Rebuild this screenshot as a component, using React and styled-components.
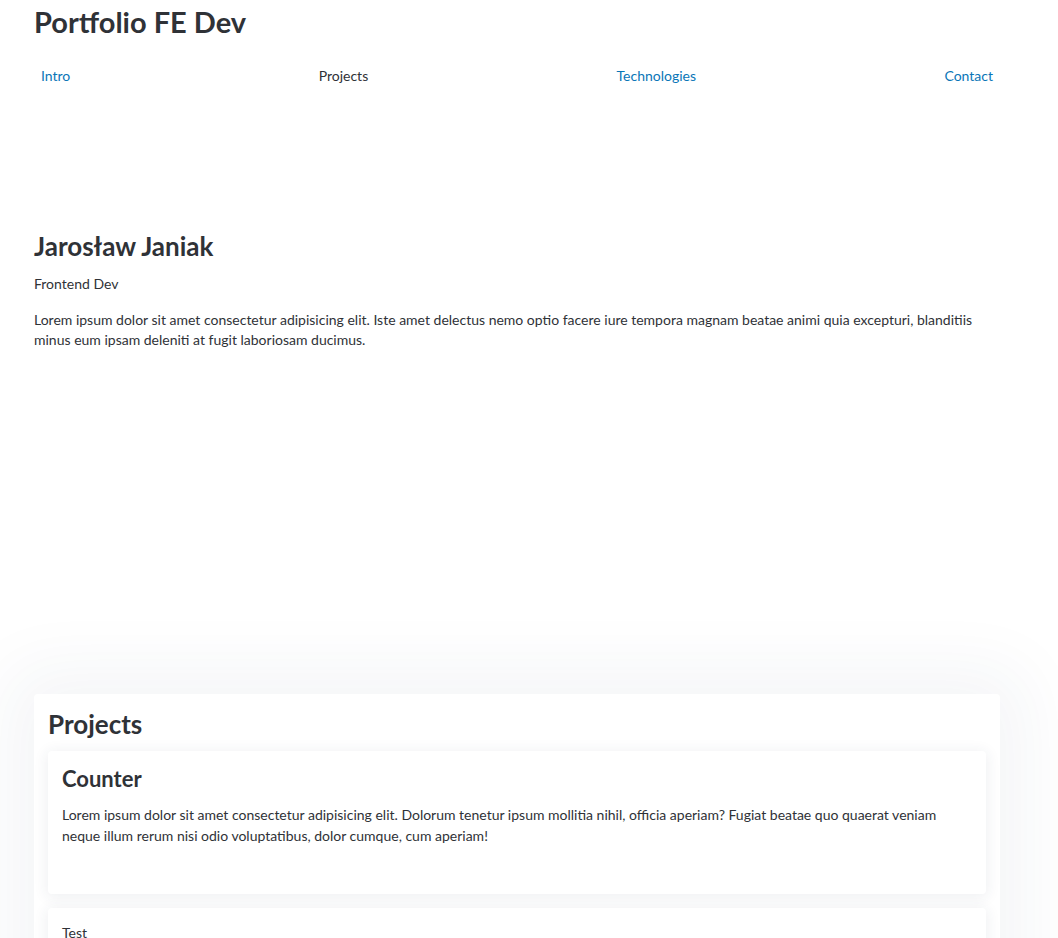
import React from "react"
import styled, { createGlobalStyle } from "styled-components"

const GlobalStyle = createGlobalStyle`
  html, body {
    margin: 0;
    padding: 0;
    background: #fff;
  }
  body {
    font-family: "Lato", "Open Sans", sans-serif;
    color: #2f3237;
    font-size: 14px;
  }
`

const Page = styled.div`
  padding: 0 58px 0 34px;
`

const Header = styled.header`
  display: flex;
  flex-direction: column;
`

const Title = styled.h1`
  margin: 0;
  padding-top: 4px;
  font-size: 29px;
  line-height: 36px;
  font-weight: 700;
`

const Nav = styled.ul`
  list-style: none;
  margin: 26px 0 0;
  padding: 0;
  display: flex;
  justify-content: space-between;
`

const NavItem = styled.li`
  padding: 0 7px;
  line-height: 20px;
  font-size: 14px;
  color: ${(p) => (p.$active ? "#2f3237" : "#0a76b7")};
`

const Hero = styled.section`
  padding-top: 144px;
  height: 608px;
  box-sizing: border-box;
`

const Name = styled.h2`
  margin: 0;
  font-size: 26px;
  line-height: 32px;
  font-weight: 700;
`

const Role = styled.p`
  margin: 12px 0 0;
  line-height: 20px;
`

const Text = styled.p`
  margin: ${(p) => p.$mt || "16px"} 0 0;
  line-height: ${(p) => p.$lh || "20px"};
`

const Section = styled.section`
  background: #fff;
  border-radius: 4px;
  padding: 14px 14px 40px;
  box-shadow: 0 0 70px 24px rgba(40, 50, 90, 0.05);
`

const SectionTitle = styled.h2`
  margin: 0 0 12px;
  padding-top: 1px;
  font-size: 26px;
  line-height: 30px;
  font-weight: 700;
`

const Card = styled.article`
  background: #fff;
  border-radius: 4px;
  padding: 14px 14px ${(p) => p.$pb || "40px"};
  margin-bottom: 14px;
  box-shadow: 0 2px 14px 2px rgba(40, 50, 90, 0.07);
`

const CardTitle = styled.h3`
  margin: 0;
  font-size: 22px;
  line-height: 28px;
  font-weight: 700;
`

export default function App() {
  return (
    <>
      <GlobalStyle />
      <Page>
        <Header>
          <Title>Portfolio FE Dev</Title>
          <Nav>
            <NavItem>Intro</NavItem>
            <NavItem $active>Projects</NavItem>
            <NavItem>Technologies</NavItem>
            <NavItem>Contact</NavItem>
          </Nav>
        </Header>
        <Hero>
          <Name>Jarosław Janiak</Name>
          <Role>Frontend Dev</Role>
          <Text>
            Lorem ipsum dolor sit amet consectetur adipisicing elit. Iste amet delectus nemo optio facere iure
            tempora magnam beatae animi quia excepturi, blanditiis minus eum ipsam deleniti at fugit laboriosam
            ducimus.
          </Text>
        </Hero>
        <Section>
          <SectionTitle>Projects</SectionTitle>
          <Card $pb="48px">
            <CardTitle>Counter</CardTitle>
            <Text $mt="11px" $lh="21px">
              Lorem ipsum dolor sit amet consectetur adipisicing elit. Dolorum tenetur ipsum mollitia nihil, officia
              aperiam? Fugiat beatae quo quaerat veniam neque illum rerum nisi odio voluptatibus, dolor cumque, cum
              aperiam!
            </Text>
          </Card>
          <Card>
            <Text $mt="1px">Test</Text>
          </Card>
        </Section>
      </Page>
    </>
  )
}
